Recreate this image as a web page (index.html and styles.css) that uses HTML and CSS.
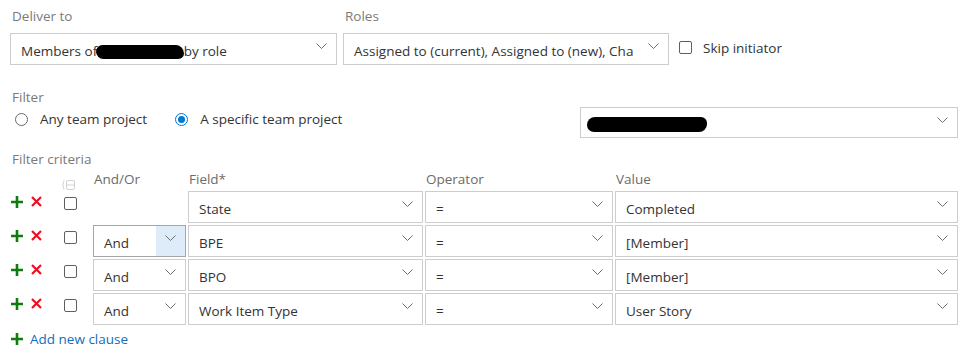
FILE: index.html
```html
<!DOCTYPE html>
<html>
<head>
  <title>Subscription filter</title>
  <link rel="stylesheet" href="styles.css">
</head>
<body>
  <div class="page">

    <div class="deliver-row">
      <div class="field deliver">
        <div class="label">Deliver to</div>
        <div class="select">
          <span class="select-text">Members of <span class="redact redact-team"></span>by role</span>
          <span class="chev-btn"><svg class="chev" width="11" height="6" viewBox="0 0 11 6"><polyline points="0.5,0.5 5.5,5.5 10.5,0.5"/></svg></span>
        </div>
      </div>
      <div class="field roles">
        <div class="label">Roles</div>
        <div class="select">
          <span class="select-text">Assigned to (current), Assigned to (new), Cha</span>
          <span class="chev-btn"><svg class="chev" width="11" height="6" viewBox="0 0 11 6"><polyline points="0.5,0.5 5.5,5.5 10.5,0.5"/></svg></span>
        </div>
      </div>
      <div class="skip">
        <span class="checkbox"></span>
        <span>Skip initiator</span>
      </div>
    </div>

    <div class="filter">
      <div class="filter-left">
        <div class="label">Filter</div>
        <div class="radios">
          <span class="radio"><span class="radio-dot"></span>Any team project</span>
          <span class="radio checked"><span class="radio-dot"></span>A specific team project</span>
        </div>
      </div>
      <div class="select project">
        <span class="select-text"><span class="redact redact-project"></span></span>
        <span class="chev-btn"><svg class="chev" width="11" height="6" viewBox="0 0 11 6"><polyline points="0.5,0.5 5.5,5.5 10.5,0.5"/></svg></span>
      </div>
    </div>

    <div class="label criteria-label">Filter criteria</div>

    <div class="clauses">
      <div></div>
      <div class="group-icon">
        <svg width="14" height="10" viewBox="0 0 14 10"><path d="M3 0.5 Q0.6 5 3 9.5"/><rect x="5.5" y="0.5" width="8" height="9" rx="1.5"/><path d="M5.5 5h8"/></svg>
      </div>
      <div class="head">And/Or</div>
      <div class="head">Field*</div>
      <div class="head">Operator</div>
      <div class="head">Value</div>

      <!-- clause 1 -->
      <div class="actions">
        <svg class="add" width="12" height="12" viewBox="0 0 12 12"><path d="M6 0v12M0 6h12"/></svg>
        <svg class="del" width="11" height="11" viewBox="0 0 11 11"><path d="M1 1l9 9M10 1l-9 9"/></svg>
      </div>
      <div class="check-cell"><span class="checkbox"></span></div>
      <div></div>
      <div class="select"><span class="select-text">State</span><span class="chev-btn"><svg class="chev" width="11" height="6" viewBox="0 0 11 6"><polyline points="0.5,0.5 5.5,5.5 10.5,0.5"/></svg></span></div>
      <div class="select"><span class="select-text">=</span><span class="chev-btn"><svg class="chev" width="11" height="6" viewBox="0 0 11 6"><polyline points="0.5,0.5 5.5,5.5 10.5,0.5"/></svg></span></div>
      <div class="select"><span class="select-text">Completed</span><span class="chev-btn"><svg class="chev" width="11" height="6" viewBox="0 0 11 6"><polyline points="0.5,0.5 5.5,5.5 10.5,0.5"/></svg></span></div>

      <!-- clause 2 -->
      <div class="actions">
        <svg class="add" width="12" height="12" viewBox="0 0 12 12"><path d="M6 0v12M0 6h12"/></svg>
        <svg class="del" width="11" height="11" viewBox="0 0 11 11"><path d="M1 1l9 9M10 1l-9 9"/></svg>
      </div>
      <div class="check-cell"><span class="checkbox"></span></div>
      <div class="select hover"><span class="select-text">And</span><span class="chev-btn"><svg class="chev" width="11" height="6" viewBox="0 0 11 6"><polyline points="0.5,0.5 5.5,5.5 10.5,0.5"/></svg></span></div>
      <div class="select"><span class="select-text">BPE</span><span class="chev-btn"><svg class="chev" width="11" height="6" viewBox="0 0 11 6"><polyline points="0.5,0.5 5.5,5.5 10.5,0.5"/></svg></span></div>
      <div class="select"><span class="select-text">=</span><span class="chev-btn"><svg class="chev" width="11" height="6" viewBox="0 0 11 6"><polyline points="0.5,0.5 5.5,5.5 10.5,0.5"/></svg></span></div>
      <div class="select"><span class="select-text">[Member]</span><span class="chev-btn"><svg class="chev" width="11" height="6" viewBox="0 0 11 6"><polyline points="0.5,0.5 5.5,5.5 10.5,0.5"/></svg></span></div>

      <!-- clause 3 -->
      <div class="actions">
        <svg class="add" width="12" height="12" viewBox="0 0 12 12"><path d="M6 0v12M0 6h12"/></svg>
        <svg class="del" width="11" height="11" viewBox="0 0 11 11"><path d="M1 1l9 9M10 1l-9 9"/></svg>
      </div>
      <div class="check-cell"><span class="checkbox"></span></div>
      <div class="select"><span class="select-text">And</span><span class="chev-btn"><svg class="chev" width="11" height="6" viewBox="0 0 11 6"><polyline points="0.5,0.5 5.5,5.5 10.5,0.5"/></svg></span></div>
      <div class="select"><span class="select-text">BPO</span><span class="chev-btn"><svg class="chev" width="11" height="6" viewBox="0 0 11 6"><polyline points="0.5,0.5 5.5,5.5 10.5,0.5"/></svg></span></div>
      <div class="select"><span class="select-text">=</span><span class="chev-btn"><svg class="chev" width="11" height="6" viewBox="0 0 11 6"><polyline points="0.5,0.5 5.5,5.5 10.5,0.5"/></svg></span></div>
      <div class="select"><span class="select-text">[Member]</span><span class="chev-btn"><svg class="chev" width="11" height="6" viewBox="0 0 11 6"><polyline points="0.5,0.5 5.5,5.5 10.5,0.5"/></svg></span></div>

      <!-- clause 4 -->
      <div class="actions">
        <svg class="add" width="12" height="12" viewBox="0 0 12 12"><path d="M6 0v12M0 6h12"/></svg>
        <svg class="del" width="11" height="11" viewBox="0 0 11 11"><path d="M1 1l9 9M10 1l-9 9"/></svg>
      </div>
      <div class="check-cell"><span class="checkbox"></span></div>
      <div class="select"><span class="select-text">And</span><span class="chev-btn"><svg class="chev" width="11" height="6" viewBox="0 0 11 6"><polyline points="0.5,0.5 5.5,5.5 10.5,0.5"/></svg></span></div>
      <div class="select"><span class="select-text">Work Item Type</span><span class="chev-btn"><svg class="chev" width="11" height="6" viewBox="0 0 11 6"><polyline points="0.5,0.5 5.5,5.5 10.5,0.5"/></svg></span></div>
      <div class="select"><span class="select-text">=</span><span class="chev-btn"><svg class="chev" width="11" height="6" viewBox="0 0 11 6"><polyline points="0.5,0.5 5.5,5.5 10.5,0.5"/></svg></span></div>
      <div class="select"><span class="select-text">User Story</span><span class="chev-btn"><svg class="chev" width="11" height="6" viewBox="0 0 11 6"><polyline points="0.5,0.5 5.5,5.5 10.5,0.5"/></svg></span></div>
    </div>

    <div class="add-clause">
      <svg class="add" width="12" height="12" viewBox="0 0 12 12"><path d="M6 0v12M0 6h12"/></svg>
      <span>Add new clause</span>
    </div>

  </div>
</body>
</html>
```

FILE: styles.css
```css
body {
  margin: 0;
  font-family: "Open Sans", "Noto Sans", sans-serif;
  font-size: 13.5px;
  color: #333;
  background: #fff;
}

.page {
  width: 948px;
  padding: 6px 0 0 10px;
}

.label {
  height: 20px;
  line-height: 20px;
  color: #7a7a7a;
  padding-left: 2px;
}

/* dropdowns */
.select {
  box-sizing: border-box;
  height: 32px;
  border: 1px solid #cdcdcd;
  display: flex;
  align-items: center;
  background: #fff;
}

.select-text {
  flex: 1;
  padding: 4px 0 0 10px;
  white-space: nowrap;
  overflow: hidden;
}

.chev-btn {
  width: 29px;
  height: 100%;
  display: flex;
  align-items: center;
  justify-content: center;
}

.chev {
  margin-bottom: 6px;
  fill: none;
  stroke: #6d6d6d;
  stroke-width: 1;
}

.select.hover {
  border-color: #a6a6a6;
}

.select.hover .chev-btn {
  background: #deecf9;
}

.redact {
  display: inline-block;
  background: #000;
  vertical-align: -3px;
}

.redact-team {
  width: 88px;
  height: 14px;
  border-radius: 7px 9px 6px 8px;
  margin-left: -5px;
}

.redact-project {
  width: 120px;
  height: 15px;
  border-radius: 8px 6px 8px 7px;
  margin-left: -4px;
  vertical-align: -2px;
}

/* top row */
.deliver-row {
  display: flex;
  align-items: flex-end;
}

.field .label {
  margin-bottom: 7px;
}

.deliver {
  width: 327px;
}

.roles {
  width: 326px;
  margin-left: 6px;
}

.skip {
  display: flex;
  align-items: center;
  gap: 11px;
  height: 32px;
  padding-bottom: 3px;
  box-sizing: border-box;
  margin-left: 10px;
}

.checkbox {
  box-sizing: border-box;
  display: inline-block;
  width: 13px;
  height: 13px;
  border: 1px solid #5f5f5f;
  border-radius: 2px;
  background: #fff;
}

/* filter */
.filter {
  display: flex;
  margin-top: 22px;
}

.radios {
  display: flex;
  height: 24px;
  align-items: center;
}

.radio {
  display: inline-flex;
  align-items: center;
  gap: 12px;
  margin-left: 5px;
}

.radio + .radio {
  margin-left: 28px;
}

.radio-dot {
  box-sizing: border-box;
  width: 13px;
  height: 13px;
  border: 1px solid #6a6a6a;
  border-radius: 50%;
  display: inline-flex;
  align-items: center;
  justify-content: center;
}

.radio.checked .radio-dot {
  border-color: #0078d4;
}

.radio.checked .radio-dot::after {
  content: "";
  width: 7px;
  height: 7px;
  border-radius: 50%;
  background: #0078d4;
}

.select.project {
  width: 378px;
  height: 31px;
  margin: 20px 0 0 auto;
}

.criteria-label {
  margin-top: 11px;
}

/* clauses grid */
.clauses {
  display: grid;
  grid-template-columns: 48px 31px 93px 235px 188px 343px;
  grid-template-rows: 20px repeat(4, 32px);
  gap: 2px;
}

.head {
  color: #6b6b6b;
  line-height: 20px;
  padding-left: 1px;
}

.group-icon {
  padding: 7px 0 0 1px;
}

.group-icon svg {
  fill: none;
  stroke: #d2d2d2;
  stroke-width: 1;
}

.actions {
  display: flex;
  gap: 8px;
  padding: 5px 0 0 1px;
  align-items: flex-start;
}

.add {
  fill: none;
  stroke: #107c10;
  stroke-width: 2.6;
}

.del {
  fill: none;
  stroke: #e81123;
  stroke-width: 2.2;
}

.check-cell {
  padding: 5px 0 0 4px;
}

.add-clause {
  display: flex;
  align-items: center;
  gap: 7px;
  height: 20px;
  margin-top: 4px;
  padding-left: 1px;
  color: #106ebe;
}
```
